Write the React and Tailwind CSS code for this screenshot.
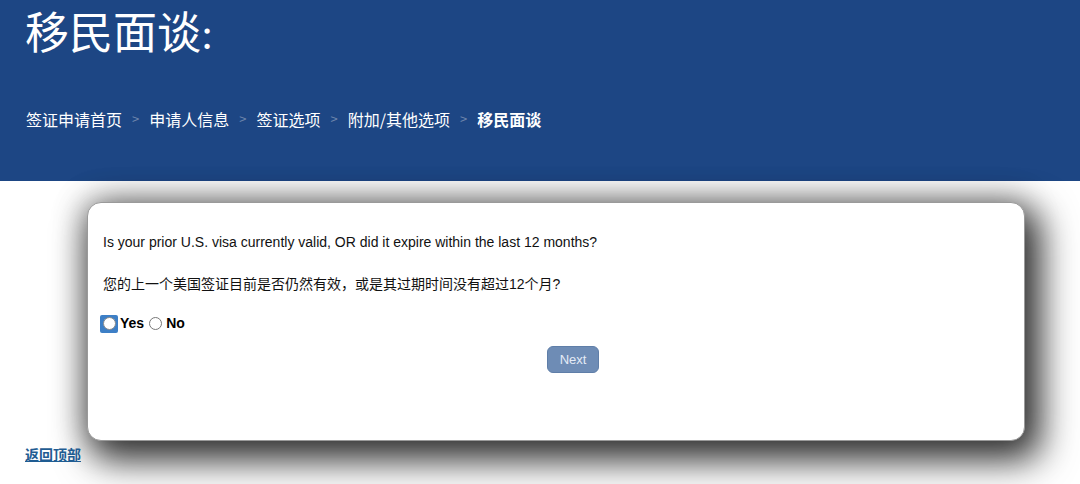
import React from 'react';

const crumbs = ['签证申请首页', '申请人信息', '签证选项', '附加/其他选项'];

function Breadcrumbs() {
	return (
		<div className="flex items-center text-[16px] text-white" style={{ fontFamily: '"Noto Sans CJK SC", "Liberation Sans", sans-serif' }}>
			{crumbs.map((c) => (
				<React.Fragment key={c}>
					<span>{c}</span>
					<span className="mx-[10px] text-[#6f86ad] text-[13px]">&gt;</span>
				</React.Fragment>
			))}
			<span className="font-bold">移民面谈</span>
		</div>
	);
}

export default function App() {
	return (
		<div className="min-h-[484px] w-[1080px] bg-white overflow-hidden" style={{ fontFamily: '"Liberation Sans", "Noto Sans CJK SC", sans-serif' }}>
			<header className="h-[181px] bg-[#1d4684] pl-[25px] pt-[5px]">
				<h1 className="text-[44px] leading-[60px] text-white" style={{ fontFamily: '"Liberation Serif", "Noto Sans CJK SC", serif' }}>
					移民面谈:
				</h1>
				<div className="mt-[42px] ml-[1px]">
					<Breadcrumbs />
				</div>
			</header>

			<main className="pt-[21px]">
				<div className="ml-[87px] w-[938px] h-[239px] bg-white rounded-[14px] border border-[#9a9a9a] shadow-[10px_14px_36px_6px_rgba(0,0,0,0.75),0_0_30px_4px_rgba(0,0,0,0.3)] px-[15px] pt-[29px] text-[14px] text-[#111]">
					<p>Is your prior U.S. visa currently valid, OR did it expire within the last 12 months?</p>
					<p className="mt-[21px] text-[14px]">您的上一个美国签证目前是否仍然有效，或是其过期时间没有超过12个月?</p>
					<div className="mt-[18px] flex items-center font-bold text-[14px] text-black">
						<span className="flex items-center justify-center w-[18px] h-[18px] bg-[#3d7fc6] rounded-[2px] -ml-[3px]">
							<span className="w-[13px] h-[13px] rounded-full bg-white border border-[#8a8a8a]" />
						</span>
						<span className="ml-[2px]">Yes</span>
						<span className="ml-[5px] w-[13px] h-[13px] rounded-full bg-white border border-[#777]" />
						<span className="ml-[4px]">No</span>
					</div>
					<div className="mt-[12px] flex justify-center">
						<button className="ml-[34px] w-[52px] h-[27px] rounded-[6px] bg-[#6e8cb5] border border-[#5f7ea8] text-[13px] text-[#e4ebf5]">
							Next
						</button>
					</div>
				</div>
				<a href="#top" className="block ml-[25px] mt-[3px] text-[14px] font-bold text-[#1f5c92] underline" style={{ fontFamily: '"Noto Sans CJK SC", sans-serif' }}>
					返回顶部
				</a>
			</main>
		</div>
	);
}
